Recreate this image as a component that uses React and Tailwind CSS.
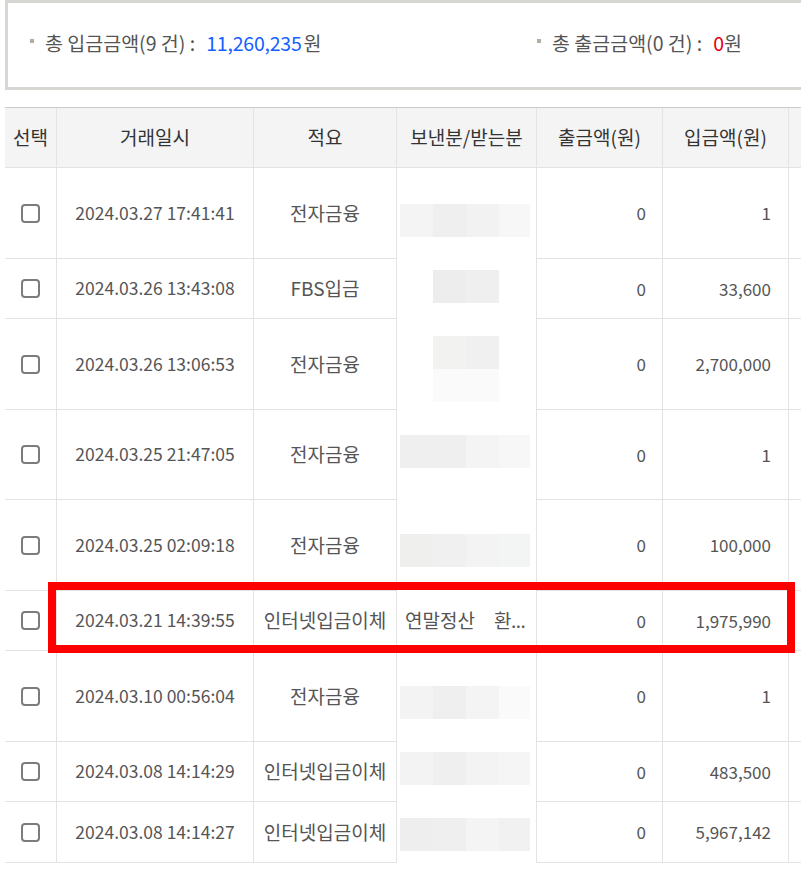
import React from "react";

const rows = [
  { date: "2024.03.27 17:41:41", memo: "전자금융", out: "0", inn: "1", h: "h-[91px]", blur: { top: "mt-[36px]", blocks: [["#f4f4f4", "#efefef", "#f2f2f2", "#f7f7f7"]] } },
  { date: "2024.03.26 13:43:08", memo: "FBS입금", out: "0", inn: "33,600", h: "h-[60px]", blur: { top: "mt-[11px]", blocks: [[null, "#ededed", "#efefef", null]] } },
  { date: "2024.03.26 13:06:53", memo: "전자금융", out: "0", inn: "2,700,000", h: "h-[91px]", blur: { top: "mt-[17px]", blocks: [[null, "#f2f2f0", "#eff0ef", null], [null, "#fafafa", "#fafafa", null]] } },
  { date: "2024.03.25 21:47:05", memo: "전자금융", out: "0", inn: "1", h: "h-[90px]", blur: { top: "mt-[25px]", blocks: [["#efefef", "#efefef", "#f4f4f4", "#f7f7f7"]] } },
  { date: "2024.03.25 02:09:18", memo: "전자금융", out: "0", inn: "100,000", h: "h-[91px]", blur: { top: "mt-[34px]", blocks: [["#efefee", "#f0f0f0", "#f3f3f3", "#f3f4f4"]] } },
  { date: "2024.03.21 14:39:55", memo: "인터넷입금이체", out: "0", inn: "1,975,990", h: "h-[60px]", sender: true },
  { date: "2024.03.10 00:56:04", memo: "전자금융", out: "0", inn: "1", h: "h-[91px]", blur: { top: "mt-[35px]", blocks: [["#f3f3f3", "#efefef", "#f4f4f4", "#fafafa"]] } },
  { date: "2024.03.08 14:14:29", memo: "인터넷입금이체", out: "0", inn: "483,500", h: "h-[60px]", blur: { top: "mt-[10px]", blocks: [["#f3f3f3", "#efefef", "#f3f3f3", "#f5f5f5"]] } },
  { date: "2024.03.08 14:14:27", memo: "인터넷입금이체", out: "0", inn: "5,967,142", h: "h-[61px]", blur: { top: "mt-[16px]", blocks: [["#eeeeee", "#efefef", "#f4f4f4", "#f1f1f1"]] } },
];

const widths = ["w-[33px]", "w-[33px]", "w-[33px]", "w-[31px]"];

function Mosaic({ blur }) {
  return (
    <div className={`${blur.top} ml-[3px] flex flex-col`}>
      {blur.blocks.map((line, i) => (
        <div key={i} className="flex h-[33px]">
          {line.map((c, j) => (
            <div key={j} className={`${widths[j]} h-full`} style={{ background: c || "transparent" }} />
          ))}
        </div>
      ))}
    </div>
  );
}

const grid = "grid grid-cols-[51px_197px_143px_140px_126px_126px_1fr]";
const cell = "border-b border-[#e3e3e3] flex items-center";

export default function App() {
  return (
    <div className="relative w-[801px] h-[873px] overflow-hidden bg-white text-[#555] font-['Noto_Sans_CJK_KR','Noto_Sans',sans-serif]">
      {/* summary box */}
      <div className="ml-[5px] w-[830px] h-[90px] border-[3px] border-[#d6d6d2] flex items-center pl-[22px] pb-[4px] text-[19.5px]">
        <div className="w-[507px] flex items-center">
          <span className="w-[4px] h-[4px] bg-[#b4aba3] mb-[5px]" />
          <span className="ml-[11px]">총 입금금액(9 건) :</span>
          <span className="ml-[11px] text-[#1560ff] tracking-[-0.2px]">11,260,235</span>
          <span className="ml-[2px]">원</span>
        </div>
        <div className="flex items-center">
          <span className="w-[4px] h-[4px] bg-[#b4aba3] mb-[5px]" />
          <span className="ml-[11px]">총 출금금액(0 건) :</span>
          <span className="ml-[11px] text-[#e00014]">0</span>
          <span>원</span>
        </div>
      </div>

      {/* table */}
      <div className="mt-[17px] ml-[5px] w-[830px] text-[17px]">
        <div className={`${grid} h-[61px] border-t border-[#cccccc] bg-[#f4f4f4] text-[#333] text-[19px]`}>
          <div className={`${cell} justify-center`}>선택</div>
          <div className={`${cell} justify-center border-l`}>거래일시</div>
          <div className={`${cell} justify-center border-l`}>적요</div>
          <div className={`${cell} justify-center border-l`}>보낸분/받는분</div>
          <div className={`${cell} justify-center border-l`}>출금액(원)</div>
          <div className={`${cell} justify-center border-l`}>입금액(원)</div>
          <div className={`${cell} border-l`} />
        </div>
        {rows.map((r) => (
          <div key={r.date} className={`${grid} ${r.h}`}>
            <div className={`${cell} justify-center`}>
              <div className="w-[19px] h-[19px] border-2 border-[#7c7c7c] rounded-[4px] bg-white" />
            </div>
            <div className={`${cell} justify-center border-l text-[17.5px]`}>{r.date}</div>
            <div className={`${cell} justify-center border-l text-[19px]`}>{r.memo}</div>
            {r.sender ? (
              <div className={`${cell} border-l pl-[8px] whitespace-nowrap overflow-hidden text-[19px]`}>
                <span>연말정산</span>
                <span className="ml-[19px] tracking-[-0.5px]">환...</span>
              </div>
            ) : (
              <div className="border-l border-[#e3e3e3] flex items-start">
                <Mosaic blur={r.blur} />
              </div>
            )}
            <div className={`${cell} justify-end border-l pr-[16px]`}>{r.out}</div>
            <div className={`${cell} justify-end border-l pr-[17px]`}>{r.inn}</div>
            <div className={`${cell} border-l`} />
          </div>
        ))}
      </div>

      {/* highlight annotation */}
      <div className="absolute left-[48px] top-[582px] w-[747px] h-[71px] border-[8px] border-[#ff0000] pointer-events-none" />
    </div>
  );
}
